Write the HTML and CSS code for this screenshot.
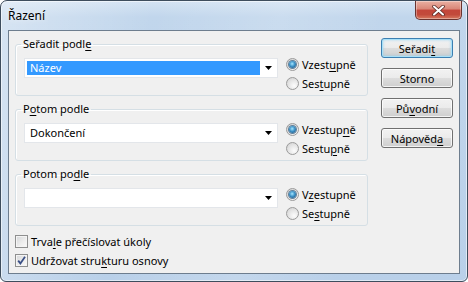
FILE: index.html
```html
<!DOCTYPE html>
<html>
  <head>
    <meta charset="utf-8">
    <title>Řazení</title>
    <link rel="stylesheet" href="styles.css">
  </head>
  <body>
    <div class="window">
      <div class="titlebar">
        <span class="title">Řazení</span>
        <button class="close" title="Zavřít">
          <svg width="13" height="11" viewBox="0 0 13 11">
            <path d="M2 1.5 L11 9.5 M11 1.5 L2 9.5" stroke="#5a2a24" stroke-width="3.6" stroke-linecap="round"/>
            <path d="M2 1.5 L11 9.5 M11 1.5 L2 9.5" stroke="#fff" stroke-width="2" stroke-linecap="round"/>
          </svg>
        </button>
      </div>

      <div class="client">
        <div class="main">
          <div class="groups">
            <fieldset class="group">
              <legend>Seřadit podl<u>e</u></legend>
              <div class="group-row">
                <div class="combo focused">
                  <span class="combo-value">Název</span>
                  <svg class="arrow" width="7" height="4" viewBox="0 0 7 4"><path d="M0 0 H7 L3.5 4 Z" fill="#000"/></svg>
                </div>
                <div class="radios">
                  <label class="option"><span class="radio checked"></span>Vzest<u>u</u>pně</label>
                  <label class="option"><span class="radio"></span>Ses<u>t</u>upně</label>
                </div>
              </div>
            </fieldset>

            <fieldset class="group">
              <legend>P<u>o</u>tom podle</legend>
              <div class="group-row">
                <div class="combo">
                  <span class="combo-value">Dokončení</span>
                  <svg class="arrow" width="7" height="4" viewBox="0 0 7 4"><path d="M0 0 H7 L3.5 4 Z" fill="#000"/></svg>
                </div>
                <div class="radios">
                  <label class="option"><span class="radio checked"></span>Vzestup<u>n</u>ě</label>
                  <label class="option"><span class="radio"></span>Sestu<u>p</u>ně</label>
                </div>
              </div>
            </fieldset>

            <fieldset class="group">
              <legend>Potom po<u>d</u>le</legend>
              <div class="group-row">
                <div class="combo">
                  <span class="combo-value"></span>
                  <svg class="arrow" width="7" height="4" viewBox="0 0 7 4"><path d="M0 0 H7 L3.5 4 Z" fill="#000"/></svg>
                </div>
                <div class="radios">
                  <label class="option"><span class="radio checked"></span>V<u>z</u>estupně</label>
                  <label class="option"><span class="radio"></span>Se<u>s</u>tupně</label>
                </div>
              </div>
            </fieldset>
          </div>

          <div class="buttons">
            <button class="btn default">Seřadi<u>t</u></button>
            <button class="btn">Storno</button>
            <button class="btn">Pů<u>v</u>odní</button>
            <button class="btn">Nápověd<u>a</u></button>
          </div>
        </div>

        <div class="checks">
          <label class="option"><span class="checkbox"></span>Trva<u>l</u>e přečíslovat úkoly</label>
          <label class="option">
            <span class="checkbox">
              <svg width="11" height="11" viewBox="0 0 11 11"><path d="M2.2 5.6 L4.4 8.4 L9 1.8" fill="none" stroke="#3a4f86" stroke-width="1.8"/></svg>
            </span>Udržovat stru<u>k</u>turu osnovy</label>
        </div>
      </div>
    </div>
  </body>
</html>
```

FILE: styles.css
```css
body {
  margin: 0;
  font-family: "Segoe UI", "Noto Sans", sans-serif;
  font-size: 11px;
  color: #000;
}

u {
  text-decoration-thickness: 1px;
  text-underline-offset: 2px;
}

.window {
  width: 468px;
  height: 282px;
  box-sizing: border-box;
  display: flex;
  flex-direction: column;
  padding: 0 7px 7px;
  border: 1px solid #3e4d5d;
  border-radius: 7px 7px 6px 6px;
  background:
    linear-gradient(100deg, rgba(255,255,255,.35) 0, rgba(255,255,255,0) 30%, rgba(255,255,255,.15) 55%, rgba(255,255,255,0) 75%),
    linear-gradient(to bottom, #d4e3f3 0, #c1d6ec 16px, #b9d0e9 100%);
  box-shadow: inset 0 0 0 1px rgba(255,255,255,.55);
}

.titlebar {
  height: 29px;
  display: flex;
  justify-content: space-between;
  align-items: flex-start;
}

.title {
  font-size: 12px;
  line-height: 29px;
  text-shadow: 0 0 6px rgba(255,255,255,.9);
}

.close {
  width: 47px;
  height: 19px;
  margin-right: -2px;
  padding: 0;
  display: flex;
  align-items: center;
  justify-content: center;
  border: 1px solid #6a3430;
  border-top: none;
  border-radius: 0 0 5px 5px;
  background: linear-gradient(to bottom, #eab0a2 0, #d98677 45%, #c4463a 50%, #c24a3b 75%, #d6785f 100%);
  box-shadow: inset 0 0 0 1px rgba(255,255,255,.35);
}

.client {
  flex: 1;
  display: flex;
  flex-direction: column;
  padding: 5px 6px 0;
  border: 1px solid #6d7d8e;
  background: #f0f0f0;
}

.main {
  display: flex;
  gap: 13px;
}

.groups {
  width: 353px;
  display: flex;
  flex-direction: column;
  gap: 5px;
}

.group {
  margin: 0;
  padding: 3px 0 2px 8px;
  border: 1px solid #d5dfe5;
  border-radius: 3px;
  box-shadow: inset 1px 1px 0 #fff;
}

.group legend {
  margin-left: -3px;
  padding: 0 2px;
  line-height: 16px;
}

.group-row {
  display: flex;
  align-items: flex-start;
  gap: 8px;
}

.combo {
  width: 254px;
  height: 20px;
  box-sizing: border-box;
  margin-top: 3px;
  display: flex;
  align-items: center;
  padding: 0 5px 0 2px;
  border: 1px solid #e3e6ea;
  background: #fff;
}

.combo-value {
  flex: 1;
  height: 14px;
  line-height: 14px;
  padding-left: 3px;
}

.combo.focused .combo-value {
  background: #3399ff;
  color: #fff;
  margin-right: 5px;
}

.arrow {
  margin-left: auto;
}

.radios {
  display: flex;
  flex-direction: column;
}

.option {
  display: flex;
  align-items: center;
  line-height: 19px;
  white-space: nowrap;
}

.radio {
  width: 13px;
  height: 13px;
  box-sizing: border-box;
  margin-right: 3px;
  display: flex;
  align-items: center;
  justify-content: center;
  border: 1px solid #9a9a9a;
  border-radius: 50%;
  background: radial-gradient(circle at 65% 70%, #fcfcfc 0, #e6e6e6 50%, #cdcdcd 100%);
}

.radio.checked::after {
  content: "";
  width: 7px;
  height: 7px;
  border-radius: 50%;
  background: radial-gradient(circle at 45% 40%, #a6e6ff 0, #3d93c8 45%, #17436f 100%);
  box-shadow: 0 0 0 1px #5f7f9a;
}

.buttons {
  width: 72px;
  margin-top: 2px;
  display: flex;
  flex-direction: column;
  gap: 10px;
}

.btn {
  height: 20px;
  padding: 0;
  font-family: inherit;
  font-size: 11px;
  color: #000;
  border: 1px solid #707070;
  border-radius: 3px;
  background: linear-gradient(to bottom, #f2f2f2 0, #ebebeb 50%, #dddddd 50%, #cfcfcf 100%);
  box-shadow: inset 0 0 0 1px rgba(255,255,255,.75);
}

.btn.default {
  border-color: #3c7fb1;
  box-shadow: inset 0 0 0 1px #a8e0f8, inset 0 0 3px 1px rgba(120,200,240,.6);
}

.checks {
  margin-top: 6px;
  display: flex;
  flex-direction: column;
}

.checkbox {
  width: 13px;
  height: 13px;
  box-sizing: border-box;
  margin-right: 3px;
  display: flex;
  align-items: center;
  justify-content: center;
  border: 1px solid #8e8f8f;
  background: linear-gradient(135deg, #d4d6d8 0, #eeeeee 60%, #fafafa 100%);
  box-shadow: inset 0 0 0 1px #f4f4f4;
}
```
